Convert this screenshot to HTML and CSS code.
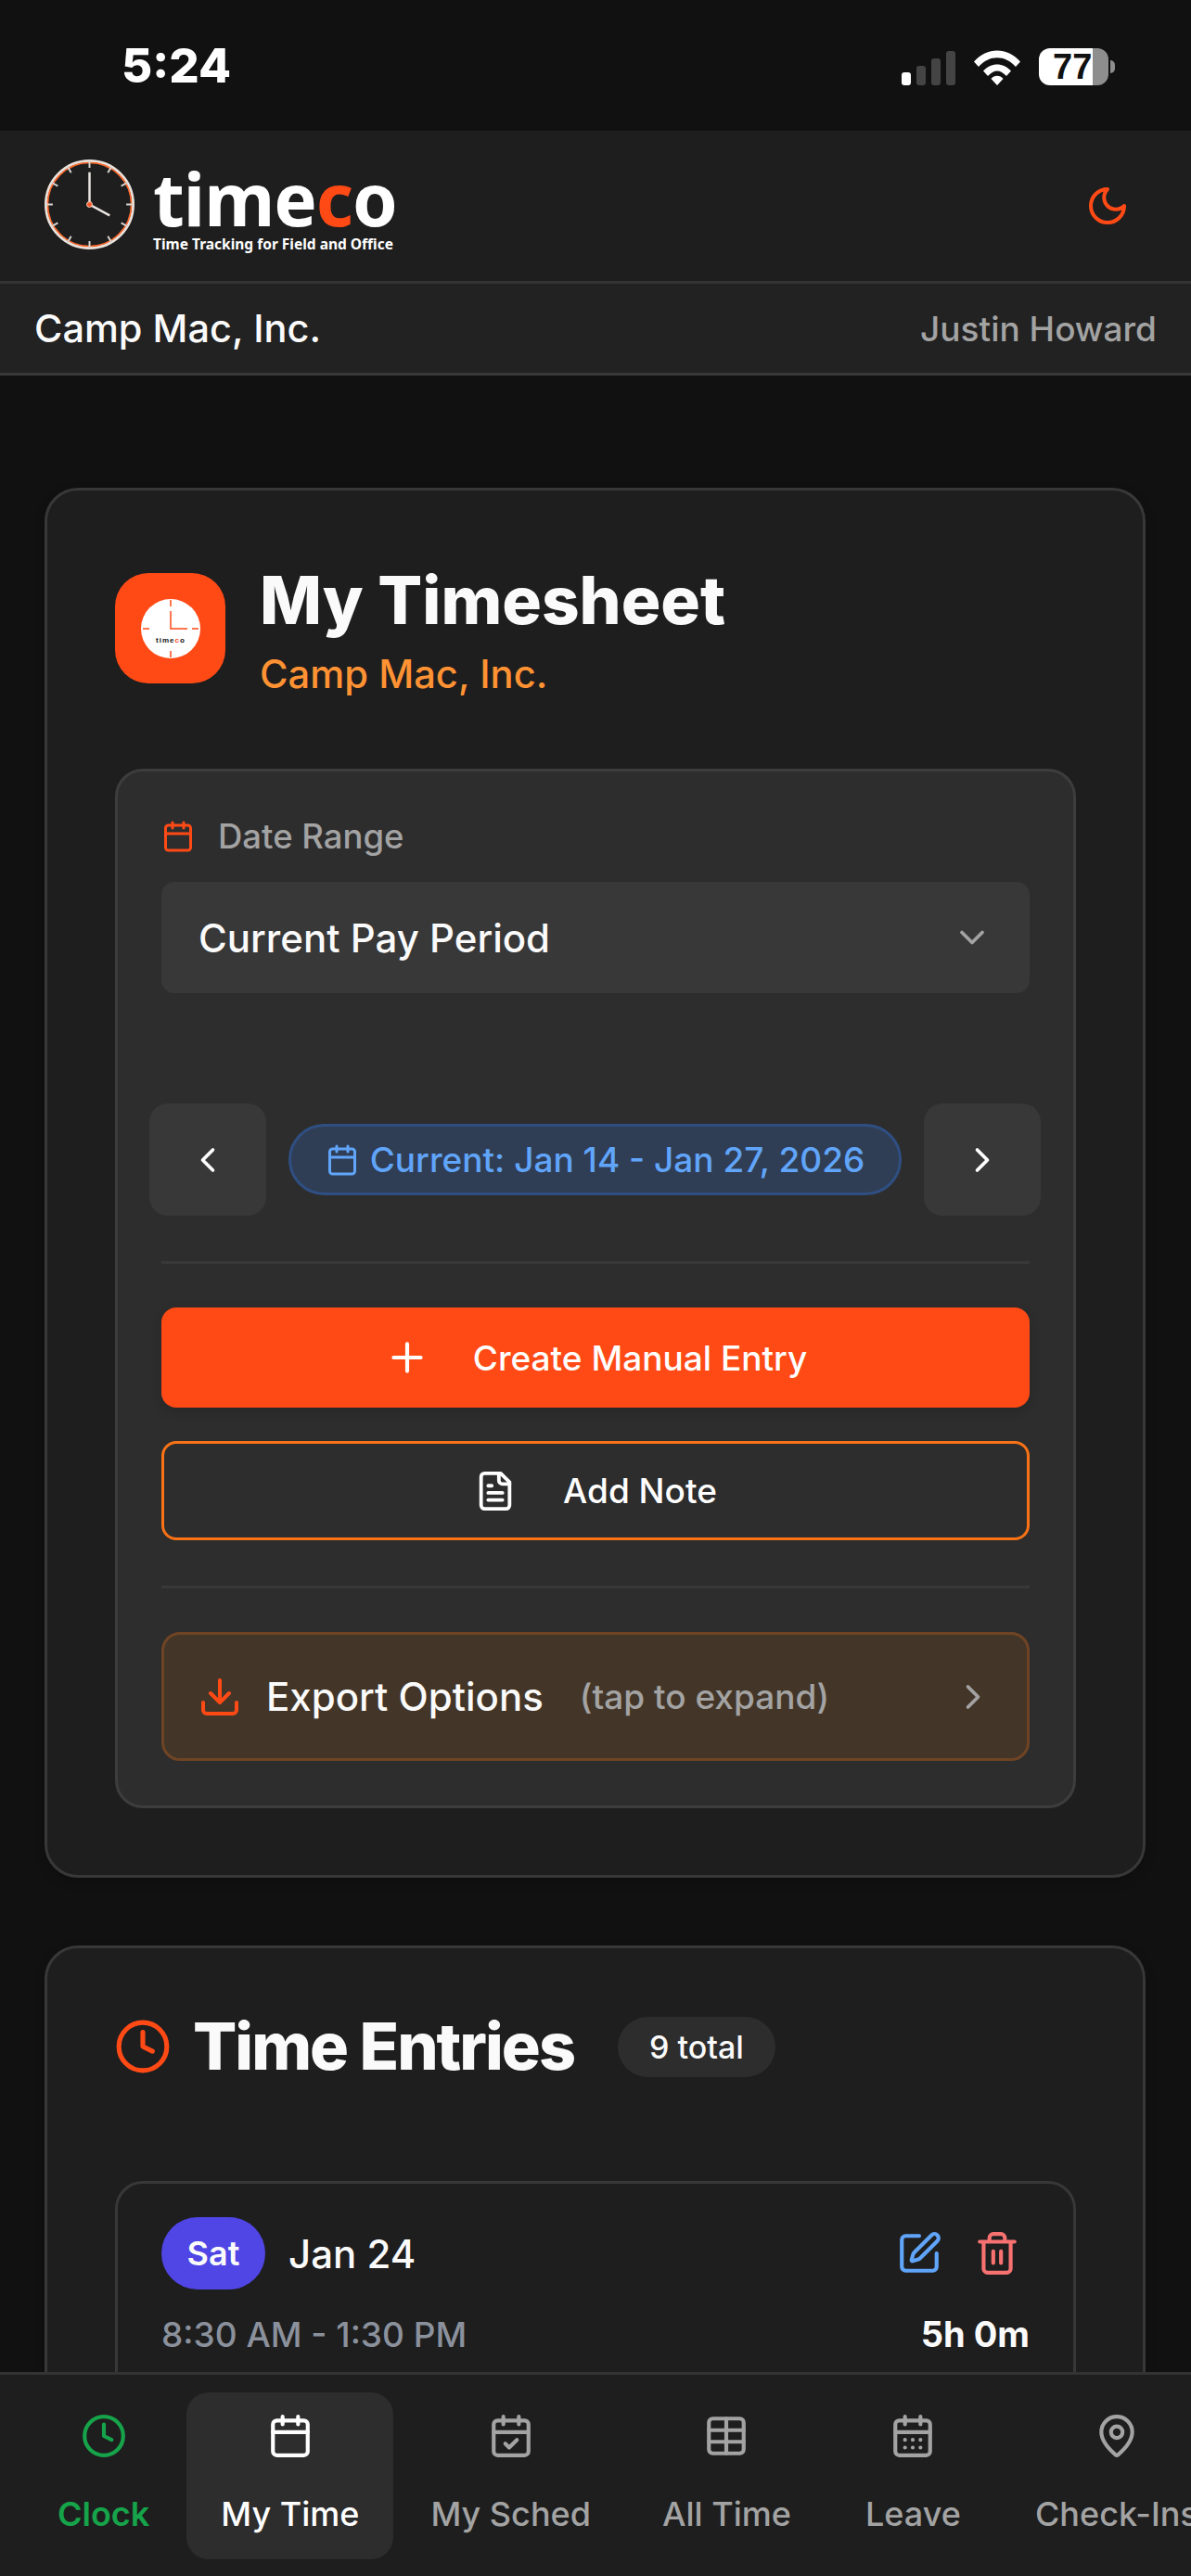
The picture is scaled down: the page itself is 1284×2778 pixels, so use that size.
FILE: index.html
```html
<!DOCTYPE html>
<html lang="en">
<head>
    <meta charset="UTF-8">
    <meta name="viewport" content="width=device-width, initial-scale=1.0">
    <title>My Timesheet</title>
    <link rel="stylesheet" href="styles.css">
</head>
<body>
    <!-- Status bar -->
    <div class="status-bar">
        <span class="status-time">5:24</span>
        <div class="status-icons">
            <div class="signal">
                <span class="bar bar-on bar-1"></span>
                <span class="bar bar-2"></span>
                <span class="bar bar-3"></span>
                <span class="bar bar-4"></span>
            </div>
            <svg class="wifi" viewBox="0 0 50 38" fill="#fff">
                <path d="M0 12.500C14-3.500 36-3.500 50 12.500L45 18C33.500 5 16.500 5 5 18Z"/>
                <path d="M10 22.500C18.500 13 31.500 13 40 22.500L35 28C28.500 20.500 21.500 20.500 15 28Z"/>
                <path d="M18.500 31C22 26.800 28 26.800 31.500 31L25 38Z"/>
            </svg>
            <div class="battery"><span>77</span></div>
            <span class="battery-cap"></span>
        </div>
    </div>

    <!-- App header -->
    <header class="app-header">
        <div class="logo">
            <svg class="logo-clock" viewBox="0 0 100 100" fill="none">
                <circle cx="50" cy="50" r="47.500" stroke="#e9e2dc" stroke-width="3"/>
                <circle cx="50" cy="50" r="45.500" stroke="#ff6a2b" stroke-width="1.500"/>
                <g stroke="#d9d4d0" stroke-width="2">
                    <path d="M50 2v8M50 90v8M2 50h8M90 50h8"/>
                    <path d="M26 8.500l4 7M74 8.500l-4 7M26 91.500l4-7M74 91.500l-4-7M8.500 26l7 4M91.500 26l-7 4M8.500 74l7-4M91.500 74l-7-4"/>
                </g>
                <path d="M50 15v35l22 12" stroke="#e9e5e1" stroke-width="2.500"/>
                <circle cx="50" cy="50" r="3" fill="#ff5a28" stroke="#f3d3c5"/>
            </svg>
            <div class="logo-text">
                <div class="logo-name">time<span class="logo-c">c</span>o</div>
                <div class="logo-tag">Time Tracking for Field and Office</div>
            </div>
        </div>
        <svg class="icon moon" viewBox="0 0 24 24">
            <path d="M12 3a6 6 0 0 0 9 9 9 9 0 1 1-9-9Z"/>
        </svg>
    </header>

    <div class="company-bar">
        <span class="company-name">Camp Mac, Inc.</span>
        <span class="user-name">Justin Howard</span>
    </div>

    <main class="content">
        <!-- Timesheet card -->
        <section class="card timesheet-card">
            <div class="title-row">
                <div class="app-tile">
                    <svg class="tile-clock" viewBox="0 0 64 64">
                        <circle cx="32" cy="32" r="32" fill="#fff"/>
                        <g stroke="#ff4a16" stroke-width="1.500" fill="none">
                            <path d="M32 1v7M32 56v7M2 32h7M55 32h7"/>
                            <path d="M32 13v19h18"/>
                        </g>
                        <text x="32" y="47" class="tile-text">time<tspan fill="#ff4a16">c</tspan>o</text>
                    </svg>
                </div>
                <div class="title-text">
                    <h1>My Timesheet</h1>
                    <p>Camp Mac, Inc.</p>
                </div>
            </div>

            <div class="panel">
                <div class="range-label">
                    <svg class="icon label-icon" viewBox="0 0 24 24">
                        <path d="M8 2v4M16 2v4"/><rect x="3" y="4" width="18" height="18" rx="2"/><path d="M3 10h18"/>
                    </svg>
                    <span>Date Range</span>
                </div>
                <div class="select-box">
                    <span>Current Pay Period</span>
                    <svg class="icon select-chevron" viewBox="0 0 24 24"><path d="m6 9 6 6 6-6"/></svg>
                </div>

                <div class="period-nav">
                    <button class="period-btn">
                        <svg class="icon" viewBox="0 0 24 24"><path d="m15 18-6-6 6-6"/></svg>
                    </button>
                    <div class="period-pill">
                        <svg class="icon" viewBox="0 0 24 24">
                            <path d="M8 2v4M16 2v4"/><rect x="3" y="4" width="18" height="18" rx="2"/><path d="M3 10h18"/>
                        </svg>
                        <span>Current: Jan 14 - Jan 27, 2026</span>
                    </div>
                    <button class="period-btn">
                        <svg class="icon" viewBox="0 0 24 24"><path d="m9 18 6-6-6-6"/></svg>
                    </button>
                </div>

                <hr class="divider">

                <button class="action-btn primary-btn">
                    <svg class="icon" viewBox="0 0 24 24"><path d="M5 12h14M12 5v14"/></svg>
                    <span>Create Manual Entry</span>
                </button>
                <button class="action-btn note-btn">
                    <svg class="icon" viewBox="0 0 24 24">
                        <path d="M15 2H6a2 2 0 0 0-2 2v16a2 2 0 0 0 2 2h12a2 2 0 0 0 2-2V7Z"/>
                        <path d="M14 2v4a2 2 0 0 0 2 2h4M10 9H8M16 13H8M16 17H8"/>
                    </svg>
                    <span>Add Note</span>
                </button>

                <hr class="divider divider-2">

                <div class="export-row">
                    <svg class="icon export-icon" viewBox="0 0 24 24">
                        <path d="M21 15v4a2 2 0 0 1-2 2H5a2 2 0 0 1-2-2v-4M7 10l5 5 5-5M12 15V3"/>
                    </svg>
                    <span class="export-title">Export Options</span>
                    <span class="export-hint">(tap to expand)</span>
                    <svg class="icon export-chevron" viewBox="0 0 24 24"><path d="m9 18 6-6-6-6"/></svg>
                </div>
            </div>
        </section>

        <!-- Time entries card -->
        <section class="card entries-card">
            <div class="entries-head">
                <svg class="icon entries-icon" viewBox="0 0 24 24">
                    <circle cx="12" cy="12" r="10"/><path d="M12 6v6l4 2"/>
                </svg>
                <h2>Time Entries</h2>
                <span class="count-pill">9 total</span>
            </div>

            <div class="entry">
                <div class="entry-top">
                    <span class="day-pill">Sat</span>
                    <span class="entry-date">Jan 24</span>
                    <svg class="icon edit-icon" viewBox="0 0 24 24">
                        <path d="M12 3H5a2 2 0 0 0-2 2v14a2 2 0 0 0 2 2h14a2 2 0 0 0 2-2v-7"/>
                        <path d="M18.375 2.625a1 1 0 0 1 3 3l-9.013 9.014a2 2 0 0 1-.853.505l-2.873.84a.5.5 0 0 1-.62-.62l.84-2.873a2 2 0 0 1 .506-.852z"/>
                    </svg>
                    <svg class="icon trash-icon" viewBox="0 0 24 24">
                        <path d="M3 6h18M19 6v14c0 1-1 2-2 2H7c-1 0-2-1-2-2V6M8 6V4c0-1 1-2 2-2h4c1 0 2 1 2 2v2M10 11v6M14 11v6"/>
                    </svg>
                </div>
                <div class="entry-bottom">
                    <span class="entry-time">8:30 AM - 1:30 PM</span>
                    <span class="entry-hours">5h 0m</span>
                </div>
            </div>
        </section>
    </main>

    <!-- Bottom navigation -->
    <nav class="bottom-nav">
        <div class="nav-item nav-clock">
            <svg class="icon" viewBox="0 0 24 24"><circle cx="12" cy="12" r="10"/><path d="M12 6v6l4 2"/></svg>
            <span>Clock</span>
        </div>
        <div class="nav-item nav-active">
            <svg class="icon" viewBox="0 0 24 24"><path d="M8 2v4M16 2v4"/><rect x="3" y="4" width="18" height="18" rx="2"/><path d="M3 10h18"/></svg>
            <span>My Time</span>
        </div>
        <div class="nav-item">
            <svg class="icon" viewBox="0 0 24 24"><path d="M8 2v4M16 2v4"/><rect x="3" y="4" width="18" height="18" rx="2"/><path d="M3 10h18M9 16l2 2 4-4"/></svg>
            <span>My Sched</span>
        </div>
        <div class="nav-item">
            <svg class="icon" viewBox="0 0 24 24"><rect x="3" y="3" width="18" height="18" rx="2"/><path d="M3 9h18M3 15h18M12 3v18"/></svg>
            <span>All Time</span>
        </div>
        <div class="nav-item nav-leave">
            <svg class="icon" viewBox="0 0 24 24"><path d="M8 2v4M16 2v4"/><rect x="3" y="4" width="18" height="18" rx="2"/><path d="M3 10h18M8 14h.01M12 14h.01M16 14h.01M8 18h.01M12 18h.01M16 18h.01"/></svg>
            <span>Leave</span>
        </div>
        <div class="nav-item">
            <svg class="icon" viewBox="0 0 24 24"><path d="M20 10c0 4.993-5.539 10.193-7.399 11.799a1 1 0 0 1-1.202 0C9.539 20.193 4 14.993 4 10a8 8 0 0 1 16 0"/><circle cx="12" cy="10" r="3"/></svg>
            <span>Check-Ins</span>
        </div>
    </nav>
</body>
</html>
```

FILE: styles.css
```css
/* Reset default styles */
* {
    margin: 0;
    padding: 0;
    box-sizing: border-box;
}

body {
    width: 1284px;
    height: 2778px;
    display: flex;
    flex-direction: column;
    overflow: hidden;
    font-family: Inter, "Liberation Sans", sans-serif;
    background-color: #111111;
    color: #fafafa;
}

/* Lucide style line icons */
.icon {
    display: block;
    flex-shrink: 0;
    width: 53px;
    height: 53px;
    fill: none;
    stroke: currentColor;
    stroke-width: 2;
    stroke-linecap: round;
    stroke-linejoin: round;
}

/* Status bar */
.status-bar {
    height: 141px;
    flex-shrink: 0;
    display: flex;
    align-items: flex-start;
    justify-content: space-between;
    padding: 46px 82px 0 131px;
    background-color: #111111;
}

.status-time {
    font-size: 51px;
    line-height: 50px;
    font-weight: 800;
    color: #fff;
}

.status-icons {
    display: flex;
    align-items: center;
    height: 40px;
    margin-top: 6px;
}

.signal {
    display: flex;
    align-items: flex-end;
    gap: 6px;
    height: 37px;
    margin-top: 2px;
}

.bar {
    width: 10px;
    border-radius: 3px;
    background-color: #444444;
}

.bar-on { background-color: #fff; }
.bar-1 { height: 14px; }
.bar-2 { height: 21px; }
.bar-3 { height: 29px; }
.bar-4 { height: 37px; }

.wifi {
    width: 50px;
    height: 38px;
    margin: 2px 20px 0 20px;
}

.battery {
    width: 75px;
    height: 40px;
    border-radius: 12px;
    background: linear-gradient(to right, #fff 58px, #8e8e8e 58px);
    color: #111;
    font-family: "Liberation Sans", sans-serif;
    font-size: 38px;
    line-height: 40px;
    font-weight: 700;
    padding-left: 15px;
}

.battery-cap {
    width: 5px;
    height: 14px;
    margin-left: 2px;
    border-radius: 0 7px 7px 0;
    background-color: #8e8e8e;
}

/* App header */
.app-header {
    height: 165px;
    flex-shrink: 0;
    display: flex;
    align-items: center;
    justify-content: space-between;
    padding: 0 66px 0 47px;
    background-color: #1e1e1e;
    border-bottom: 3px solid #333333;
}

.logo {
    display: flex;
    align-items: flex-start;
    gap: 19px;
    margin-top: -2px;
}

.logo-clock {
    width: 99px;
    height: 99px;
}

.logo-text {
    font-family: "Noto Sans", sans-serif;
    color: #fff;
}

.logo-name {
    font-size: 78px;
    line-height: 70px;
    font-weight: 700;
    margin-top: 8px;
    letter-spacing: -1px;
}

.logo-c { color: #ff4a16; }

.logo-tag {
    font-size: 15.500px;
    line-height: 18px;
    font-weight: 700;
    margin-top: 5px;
}

.moon {
    width: 48px;
    height: 48px;
    color: #ff4a16;
}

.company-bar {
    height: 99px;
    flex-shrink: 0;
    display: flex;
    align-items: center;
    justify-content: space-between;
    padding: 0 37px;
    background-color: #222222;
    border-bottom: 3px solid #3a3a3a;
}

.company-name {
    font-size: 41.500px;
    font-weight: 500;
}

.user-name {
    font-size: 37px;
    font-weight: 500;
    color: #a3a3a3;
}

/* Main area */
.content {
    flex: 1;
    min-height: 0;
    overflow: hidden;
    padding: 121px 49px 0 48px;
}

.card {
    background-color: #1e1e1e;
    border: 3px solid #383838;
    border-radius: 36px;
    box-shadow: 0 4px 12px rgba(0, 0, 0, 0.2);
}

.timesheet-card {
    padding: 89px 72px 72px 73px;
}

.title-row {
    display: flex;
    align-items: flex-start;
    gap: 37px;
    margin-bottom: 82px;
}

.app-tile {
    width: 119px;
    height: 119px;
    display: flex;
    align-items: center;
    justify-content: center;
    border-radius: 36px;
    background-color: #ff4a16;
}

.tile-clock {
    width: 64px;
    height: 64px;
}

.tile-text {
    font-family: "Liberation Sans", sans-serif;
    font-size: 8px;
    font-weight: 700;
    letter-spacing: 1px;
    text-anchor: middle;
    fill: #111;
}

.title-text {
    margin-top: -5px;
}

h1 {
    font-size: 71px;
    line-height: 68px;
    font-weight: 800;
}

.title-text p {
    margin-top: 26px;
    font-size: 41.700px;
    line-height: 40px;
    font-weight: 500;
    color: #ff9233;
}

/* Inner panel */
.panel {
    padding: 47px 47px 48px 47px;
    background-color: #2d2d2d;
    border: 3px solid #3d3d3d;
    border-radius: 30px;
}

.range-label {
    display: flex;
    align-items: center;
    gap: 25px;
    height: 46px;
    margin-bottom: 26px;
    font-size: 36.500px;
    font-weight: 500;
    color: #a3a3a3;
}

.label-icon {
    width: 36px;
    height: 36px;
    color: #ff4a16;
}

.select-box {
    height: 120px;
    display: flex;
    align-items: center;
    justify-content: space-between;
    padding: 0 40px;
    border-radius: 14px;
    background-color: #383838;
    font-size: 42px;
    font-weight: 500;
}

.select-chevron {
    width: 44px;
    height: 44px;
    color: #a3a3a3;
}

.period-nav {
    display: flex;
    align-items: center;
    justify-content: space-between;
    margin: 119px -12px 0 -13px;
}

.period-btn {
    width: 126px;
    height: 121px;
    display: flex;
    align-items: center;
    justify-content: center;
    border: none;
    border-radius: 20px;
    background-color: #383838;
    color: #fff;
}

.period-btn .icon {
    width: 44px;
    height: 44px;
}

.period-pill {
    width: 661px;
    height: 77px;
    display: flex;
    align-items: center;
    justify-content: center;
    gap: 12px;
    border: 3px solid #2f4f82;
    border-radius: 39px;
    background-color: #303e55;
    color: #60a5fa;
    font-size: 37px;
    font-weight: 500;
}

.period-pill .icon {
    width: 36px;
    height: 36px;
}

.divider {
    height: 3px;
    margin-top: 49px;
    border: none;
    background-color: #383838;
}

.action-btn {
    width: 100%;
    display: flex;
    align-items: center;
    justify-content: center;
    gap: 46px;
    border-radius: 16px;
    color: #fff;
    font-family: Inter, "Liberation Sans", sans-serif;
    font-size: 37px;
    font-weight: 500;
}

.primary-btn {
    height: 108px;
    margin-top: 47px;
    border: none;
    background-color: #ff4a16;
    box-shadow: 0 4px 12px rgba(0, 0, 0, 0.15);
}

.primary-btn .icon {
    width: 50px;
    height: 50px;
}

.note-btn {
    height: 107px;
    margin-top: 36px;
    border: 3px solid #f97316;
    background-color: transparent;
    gap: 50px;
}

.note-btn .icon {
    width: 46px;
    height: 46px;
}

.divider-2 {
    margin-top: 49px;
}

.export-row {
    height: 139px;
    display: flex;
    align-items: center;
    margin-top: 47px;
    padding: 0 36px;
    border: 3px solid #6f4424;
    border-radius: 20px;
    background-color: #433628;
    font-weight: 500;
}

.export-icon {
    width: 48px;
    height: 48px;
    margin-right: 26px;
    color: #ff4a16;
}

.export-title {
    font-size: 42px;
}

.export-hint {
    margin-left: 39px;
    font-size: 37px;
    color: #a3a3a3;
}

.export-chevron {
    width: 44px;
    height: 44px;
    margin-left: auto;
    color: #a3a3a3;
}

/* Time entries */
.entries-card {
    margin-top: 73px;
    height: 700px;
    padding: 72px 72px 0 73px;
}

.entries-head {
    display: flex;
    align-items: center;
    height: 68px;
}

.entries-icon {
    width: 62px;
    height: 62px;
    margin-left: -1px;
    color: #ff4a16;
}

h2 {
    margin-left: 23px;
    font-size: 70px;
    line-height: 68px;
    font-weight: 800;
    letter-spacing: -2px;
}

.count-pill {
    margin-left: 47px;
    padding: 0 34px;
    height: 65px;
    line-height: 65px;
    border-radius: 33px;
    background-color: #2d2d2d;
    font-size: 34px;
    font-weight: 500;
}

.entry {
    height: 500px;
    margin-top: 111px;
    padding: 36px 47px 0 47px;
    border: 3px solid #383838;
    border-radius: 30px;
}

.entry-top {
    display: flex;
    align-items: center;
}

.day-pill {
    width: 112px;
    height: 78px;
    line-height: 78px;
    text-align: center;
    border-radius: 39px;
    background-color: #4f46e5;
    font-size: 36px;
    font-weight: 600;
}

.entry-date {
    margin-left: 25px;
    font-size: 42px;
    font-weight: 500;
}

.edit-icon {
    width: 50px;
    height: 50px;
    margin-left: auto;
    color: #60a5fa;
}

.trash-icon {
    width: 50px;
    height: 50px;
    margin-left: 34px;
    margin-right: 10px;
    color: #f87171;
}

.entry-bottom {
    display: flex;
    align-items: center;
    justify-content: space-between;
    margin-top: 25px;
}

.entry-time {
    font-size: 37px;
    font-weight: 500;
    color: #8b919c;
}

.entry-hours {
    font-size: 38px;
    font-weight: 700;
}

/* Bottom navigation */
.bottom-nav {
    height: 220px;
    flex-shrink: 0;
    display: flex;
    gap: 3px;
    padding: 19px 0 0 25px;
    overflow: hidden;
    background-color: #1e1e1e;
    border-top: 3px solid #333333;
}

.nav-item {
    height: 180px;
    flex-shrink: 0;
    display: flex;
    flex-direction: column;
    align-items: center;
    padding: 22px 37px 0 37px;
    border-radius: 24px;
    color: #a3a3a3;
    font-size: 36px;
    font-weight: 500;
}

.nav-item .icon {
    width: 50px;
    height: 50px;
}

.nav-item span {
    margin-top: 37px;
    line-height: 44px;
    white-space: nowrap;
}

.nav-clock { color: #16a34a; font-weight: 600; }

.nav-leave { min-width: 183px; }

.nav-active {
    background-color: #2d2d2d;
    color: #fff;
}
```
